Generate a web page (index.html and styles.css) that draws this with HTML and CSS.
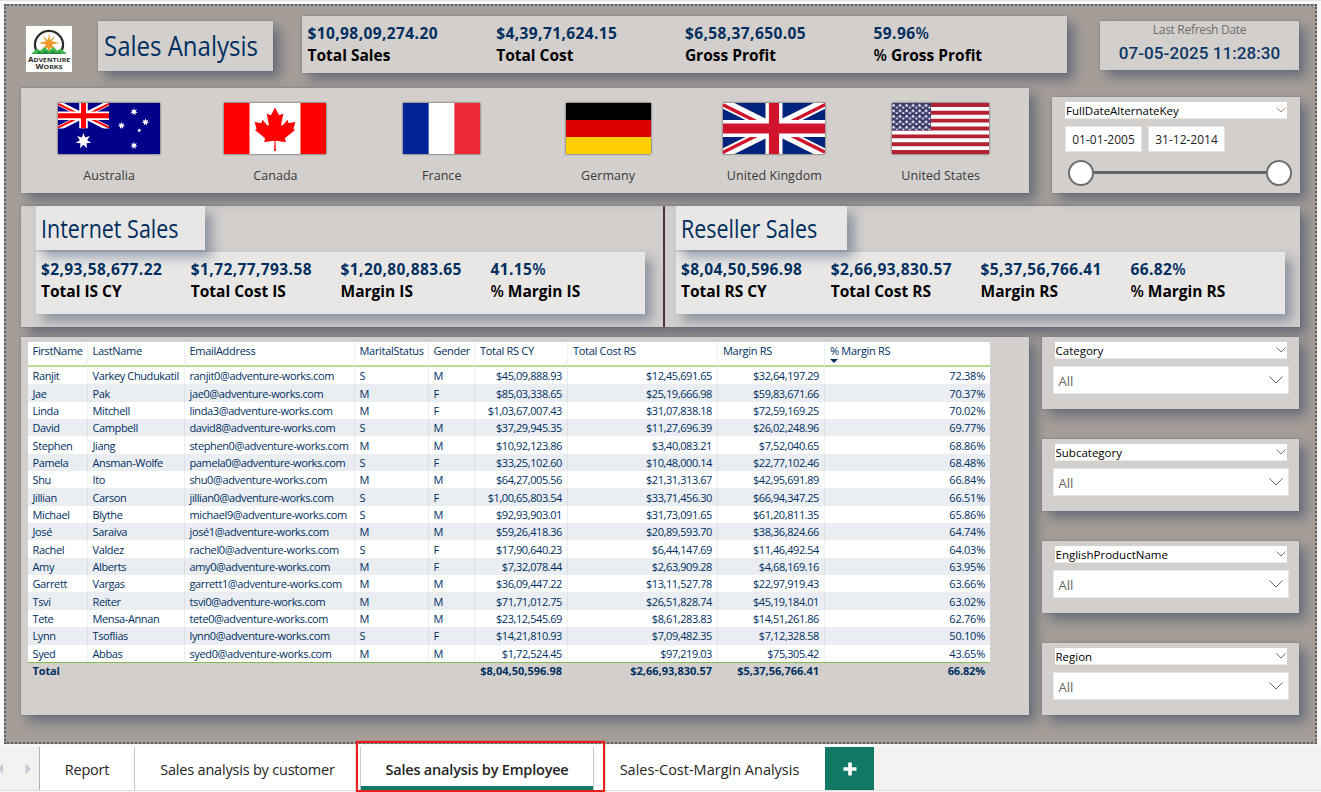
FILE: index.html
```html
<!DOCTYPE html>
<html lang="en">
<head>
<meta charset="utf-8">
<title>Sales Analysis</title>
<link rel="stylesheet" href="styles.css">
</head>
<body>
<main class="report">
  <header class="row row-top">
    <svg class="logo" viewBox="0 0 46 46">
      <rect width="46" height="46" fill="#fff"/>
      <path d="M10 24A14 14 0 1 1 36 24" fill="none" stroke="#2b2b2b" stroke-width="2.200"/>
      <path d="M23 6.500L24 14.200 29.500 9.500 25.800 15.300 33.500 17 25.800 18.500 30 24.500 24.500 21.500 23 26 21.500 21.500 16 24.500 20.200 18.500 12.500 17 20.200 15.300 16.500 9.500 22 14.200z" fill="#ee9a2b"/>
      <path d="M5 28l6-5.500 3 2.200 4.500-3.700 4.500 3.700 4.500-3.700 4 3.700 3-2.200L41 28z" fill="#43b649"/>
      <path d="M10 28l3-3 3 2.500 3-3 4 3 4-3 3.500 3 2.500-2 3 2.500z" fill="#1f8a45"/>
      <text class="logo-text" x="23" y="35.600" textLength="42" lengthAdjust="spacingAndGlyphs">A<tspan font-size="5.600">DVENTURE</tspan></text>
      <text class="logo-text" x="23" y="43" textLength="27" lengthAdjust="spacingAndGlyphs">W<tspan font-size="5.600">ORKS</tspan></text>
    </svg>
    <h1 class="panel title"><span>Sales Analysis</span></h1>
    <section class="panel kpis">
      <div class="kpi"><b>$10,98,09,274.20</b><strong>Total Sales</strong></div>
      <div class="kpi"><b>$4,39,71,624.15</b><strong>Total Cost</strong></div>
      <div class="kpi"><b>$6,58,37,650.05</b><strong>Gross Profit</strong></div>
      <div class="kpi"><b>59.96<i>%</i></b><strong><i>%</i> Gross Profit</strong></div>
    </section>
    <section class="panel refresh"><span class="refresh-label">Last Refresh Date</span><span class="refresh-value">07-05-2025 11:28:30</span></section>
  </header>

  <div class="row row-flags">
    <section class="panel flags">
      <figure><svg width="102" height="51" viewBox="0 0 102 51">
        <rect width="102" height="51" fill="#00008b"/>
        <svg width="51" height="25.500" viewBox="0 0 60 30" preserveAspectRatio="none">
          <path d="M0 0L60 30M60 0L0 30" stroke="#fff" stroke-width="6"/>
          <path d="M0 1L28 15M32 15L60 29M60 1L32 15M28 15L0 29" stroke="#f00" stroke-width="2.400"/>
          <path d="M30 0V30M0 15H60" stroke="#fff" stroke-width="10"/>
          <path d="M30 0V30M0 15H60" stroke="#f00" stroke-width="6"/>
        </svg>
        <defs><path id="star7" d="M0-8L1.600-3.400 6.300-5 3.700-.8 7.800 1.800 3 2.300 3.500 7.200 0 3.700-3.500 7.200-3 2.300-7.800 1.800-3.700-.8-6.300-5-1.600-3.400z" fill="#fff"/></defs>
        <use href="#star7" transform="translate(25.500 38)"/>
        <use href="#star7" transform="translate(76 8.800) scale(.47)"/>
        <use href="#star7" transform="translate(63.500 22.500) scale(.47)"/>
        <use href="#star7" transform="translate(87.500 19) scale(.47)"/>
        <use href="#star7" transform="translate(76 42.500) scale(.47)"/>
        <use href="#star7" transform="translate(81.300 27.500) scale(.27)"/>
      </svg><figcaption>Australia</figcaption></figure>
      <figure><svg width="102" height="51" viewBox="0 0 102 51">
        <rect width="102" height="51" fill="#f00"/><rect x="25.500" width="51" height="51" fill="#fff"/>
        <path d="M51 4.500L47.300 11.500C46.800 12.300 46.200 12.200 45.400 11.800L42.700 10.400 44.700 21C45.100 22.900 43.800 22.900 43.100 22.100L38.400 16.800 37.600 19.500C37.500 19.800 37.100 20.200 36.500 20.100L30.600 18.900 32.200 24.500C32.500 25.700 32.800 26.200 31.800 26.600L31 27 40.500 34.700C40.900 35 41.100 35.500 41 36L40.100 39C43.400 38.600 46.400 38.100 49.700 37.700 50 37.700 50.500 38.100 50.500 38.500L50.100 48H51.900L51.500 38.500C51.500 38.100 52 37.700 52.300 37.700 55.600 38.100 58.600 38.600 61.900 39L61 36C60.900 35.500 61.100 35 61.500 34.700L71 27 70.200 26.600C69.200 26.200 69.500 25.700 69.800 24.500L71.400 18.900 65.500 20.100C64.900 20.200 64.500 19.800 64.400 19.500L63.600 16.800 58.900 22.100C58.200 22.900 56.900 22.900 57.300 21L59.300 10.400 56.600 11.800C55.800 12.200 55.200 12.300 54.700 11.500z" fill="#f00"/>
      </svg><figcaption>Canada</figcaption></figure>
      <figure><svg width="77" height="51" viewBox="0 0 3 2" preserveAspectRatio="none">
        <rect width="3" height="2" fill="#fff"/><rect width="1" height="2" fill="#002395"/><rect x="2" width="1" height="2" fill="#ed2939"/>
      </svg><figcaption>France</figcaption></figure>
      <figure><svg width="85" height="51" viewBox="0 0 5 3">
        <rect width="5" height="3" fill="#d00"/><rect width="5" height="1"/><rect y="2" width="5" height="1" fill="#ffce00"/>
      </svg><figcaption>Germany</figcaption></figure>
      <figure><svg width="102" height="51" viewBox="0 0 60 30">
        <rect width="60" height="30" fill="#00247d"/>
        <path d="M0 0L60 30M60 0L0 30" stroke="#fff" stroke-width="6"/>
        <path d="M0 1.100L28 15.100M32 15L60 28.900M62 0L32 15M28 15L-2 30" stroke="#cf142b" stroke-width="2"/>
        <path d="M30 0V30M0 15H60" stroke="#fff" stroke-width="10"/>
        <path d="M30 0V30M0 15H60" stroke="#cf142b" stroke-width="6"/>
      </svg><figcaption>United Kingdom</figcaption></figure>
      <figure><svg width="97" height="51" viewBox="0 0 97 52" preserveAspectRatio="none">
        <defs><pattern id="stars" x="0" y="0" width="6.500" height="5.600" patternUnits="userSpaceOnUse"><path d="M1.600.5l.6 1.200 1.300.1-1 .8.400 1.300-1.300-.7-1.300.7.400-1.300-1-.8 1.300-.1zM4.900 3.300l.5 1 1.100.1-.9.700.3 1-1-.6-1 .6.300-1-.9-.7 1.100-.1z" fill="#fff"/></pattern></defs>
        <rect width="97" height="52" fill="#fff"/>
        <path d="M0 2H97M0 10H97M0 18H97M0 26H97M0 34H97M0 42H97M0 50H97" stroke="#b22234" stroke-width="4"/>
        <rect width="39" height="28" fill="#3c3b6e"/><rect width="39" height="28" fill="url(#stars)"/>
      </svg><figcaption>United States</figcaption></figure>
    </section>
    <section class="panel dates">
      <div class="slicer-head"><span>FullDateAlternateKey</span><svg class="chev-s warm" viewBox="0 0 10 6"><path d="M.5.500L5 5 9.500.500"/></svg></div>
      <div class="date-inputs"><span>01-01-2005</span><span>31-12-2014</span></div>
      <div class="slider"><i></i><i></i></div>
    </section>
  </div>

  <div class="row row-channels panel">
    <section class="channel internet">
      <h2 class="subtitle"><span>Internet Sales</span></h2>
      <div class="card">
        <div class="kpi"><b>$2,93,58,677.22</b><strong>Total IS CY</strong></div>
        <div class="kpi"><b>$1,72,77,793.58</b><strong>Total Cost IS</strong></div>
        <div class="kpi"><b>$1,20,80,883.65</b><strong>Margin IS</strong></div>
        <div class="kpi"><b>41.15<i>%</i></b><strong><i>%</i> Margin IS</strong></div>
      </div>
    </section>
    <section class="channel reseller">
      <h2 class="subtitle"><span>Reseller Sales</span></h2>
      <div class="card">
        <div class="kpi"><b>$8,04,50,596.98</b><strong>Total RS CY</strong></div>
        <div class="kpi"><b>$2,66,93,830.57</b><strong>Total Cost RS</strong></div>
        <div class="kpi"><b>$5,37,56,766.41</b><strong>Margin RS</strong></div>
        <div class="kpi"><b>66.82<i>%</i></b><strong><i>%</i> Margin RS</strong></div>
      </div>
    </section>
  </div>

  <div class="row row-detail">
    <section class="panel table-panel">
      <table>
        <colgroup><col class="c1"><col class="c2"><col class="c3"><col class="c4"><col class="c5"><col class="c6"><col class="c7"><col class="c8"><col class="c9"></colgroup>
        <thead><tr><th>FirstName<th>LastName<th>EmailAddress<th>MaritalStatus<th>Gender<th>Total RS CY<th>Total Cost RS<th>Margin RS<th class="sorted">% Margin RS</tr></thead>
        <tbody>
        <tr><td>Ranjit<td>Varkey Chudukatil<td>ranjit0@adventure-works.com<td>S<td>M<td>$45,09,888.93<td>$12,45,691.65<td>$32,64,197.29<td>72.38%
        <tr><td>Jae<td>Pak<td>jae0@adventure-works.com<td>M<td>F<td>$85,03,338.65<td>$25,19,666.98<td>$59,83,671.66<td>70.37%
        <tr><td>Linda<td>Mitchell<td>linda3@adventure-works.com<td>M<td>F<td>$1,03,67,007.43<td>$31,07,838.18<td>$72,59,169.25<td>70.02%
        <tr><td>David<td>Campbell<td>david8@adventure-works.com<td>S<td>M<td>$37,29,945.35<td>$11,27,696.39<td>$26,02,248.96<td>69.77%
        <tr><td>Stephen<td>Jiang<td>stephen0@adventure-works.com<td>M<td>M<td>$10,92,123.86<td>$3,40,083.21<td>$7,52,040.65<td>68.86%
        <tr><td>Pamela<td>Ansman-Wolfe<td>pamela0@adventure-works.com<td>S<td>F<td>$33,25,102.60<td>$10,48,000.14<td>$22,77,102.46<td>68.48%
        <tr><td>Shu<td>Ito<td>shu0@adventure-works.com<td>M<td>M<td>$64,27,005.56<td>$21,31,313.67<td>$42,95,691.89<td>66.84%
        <tr><td>Jillian<td>Carson<td>jillian0@adventure-works.com<td>S<td>F<td>$1,00,65,803.54<td>$33,71,456.30<td>$66,94,347.25<td>66.51%
        <tr><td>Michael<td>Blythe<td>michael9@adventure-works.com<td>S<td>M<td>$92,93,903.01<td>$31,73,091.65<td>$61,20,811.35<td>65.86%
        <tr><td>José<td>Saraiva<td>josé1@adventure-works.com<td>M<td>M<td>$59,26,418.36<td>$20,89,593.70<td>$38,36,824.66<td>64.74%
        <tr><td>Rachel<td>Valdez<td>rachel0@adventure-works.com<td>S<td>F<td>$17,90,640.23<td>$6,44,147.69<td>$11,46,492.54<td>64.03%
        <tr><td>Amy<td>Alberts<td>amy0@adventure-works.com<td>M<td>F<td>$7,32,078.44<td>$2,63,909.28<td>$4,68,169.16<td>63.95%
        <tr><td>Garrett<td>Vargas<td>garrett1@adventure-works.com<td>M<td>M<td>$36,09,447.22<td>$13,11,527.78<td>$22,97,919.43<td>63.66%
        <tr><td>Tsvi<td>Reiter<td>tsvi0@adventure-works.com<td>M<td>M<td>$71,71,012.75<td>$26,51,828.74<td>$45,19,184.01<td>63.02%
        <tr><td>Tete<td>Mensa-Annan<td>tete0@adventure-works.com<td>M<td>M<td>$23,12,545.69<td>$8,61,283.83<td>$14,51,261.86<td>62.76%
        <tr><td>Lynn<td>Tsoflias<td>lynn0@adventure-works.com<td>S<td>F<td>$14,21,810.93<td>$7,09,482.35<td>$7,12,328.58<td>50.10%
        <tr><td>Syed<td>Abbas<td>syed0@adventure-works.com<td>M<td>M<td>$1,72,524.45<td>$97,219.03<td>$75,305.42<td>43.65%
        </tbody>
        <tfoot><tr><td>Total<td><td><td><td><td>$8,04,50,596.98<td>$2,66,93,830.57<td>$5,37,56,766.41<td>66.82%</tr></tfoot>
      </table>
    </section>
    <aside class="slicers">
      <section class="panel slicer"><div class="slicer-head"><span>Category</span><svg class="chev-s" viewBox="0 0 10 6"><path d="M.5.500L5 5 9.500.500"/></svg></div><div class="select"><span>All</span><svg viewBox="0 0 14 8"><path d="M.5.500L7 7 13.500.500"/></svg></div></section>
      <section class="panel slicer"><div class="slicer-head"><span>Subcategory</span><svg class="chev-s" viewBox="0 0 10 6"><path d="M.5.500L5 5 9.500.500"/></svg></div><div class="select"><span>All</span><svg viewBox="0 0 14 8"><path d="M.5.500L7 7 13.500.500"/></svg></div></section>
      <section class="panel slicer"><div class="slicer-head"><span>EnglishProductName</span><svg class="chev-s" viewBox="0 0 10 6"><path d="M.5.500L5 5 9.500.500"/></svg></div><div class="select"><span>All</span><svg viewBox="0 0 14 8"><path d="M.5.500L7 7 13.500.500"/></svg></div></section>
      <section class="panel slicer"><div class="slicer-head"><span>Region</span><svg class="chev-s" viewBox="0 0 10 6"><path d="M.5.500L5 5 9.500.500"/></svg></div><div class="select"><span>All</span><svg viewBox="0 0 14 8"><path d="M.5.500L7 7 13.500.500"/></svg></div></section>
    </aside>
  </div>
</main>
<nav class="tabs">
  <div class="pager"><svg width="39" height="43" viewBox="0 0 39 43"><path d="M3 16.500V27L-2 21.700z" fill="#c3cad6"/><path d="M25.500 16.500V27L31 21.700z" fill="#c3cad6"/></svg></div>
  <a class="tab t-report">Report</a>
  <a class="tab t-customer">Sales analysis by customer</a>
  <a class="tab t-employee active">Sales analysis by Employee<span class="highlight"></span></a>
  <a class="tab t-margin">Sales-Cost-Margin Analysis</a>
  <a class="add"><svg width="14" height="14" viewBox="0 0 14 14"><path d="M7 .5V13.500M.5 7H13.500" stroke="#fff" stroke-width="3.600"/></svg></a>
</nav>
</body>
</html>
```
FILE: styles.css
```css
* { box-sizing: border-box; }

body {
  margin: 0;
  width: 1321px;
  height: 792px;
  overflow: hidden;
  display: flex;
  flex-direction: column;
  background: #f8f8f8;
  border-top: 1px solid #e2e2e2;
  font-family: "Open Sans", "Noto Sans", sans-serif;
  color: #002f5f;
}

h1, h2, figure { margin: 0; font-weight: 400; }
i { font-style: normal; font-weight: 600; }

.report {
  flex: none;
  width: 1313px;
  height: 740px;
  margin: 3px 0 0 4px;
  padding-top: 10px;
  background: #a59d97;
  border: 2px dotted #5f5e5d;
  overflow: hidden;
}

.row { display: flex; align-items: flex-start; }

.panel {
  background: #d3cfcc;
  box-shadow: 7px 7px 11px rgba(0, 32, 80, .36), 0 0 2px rgba(0, 32, 80, .25);
}

/* Header row */
.row-top { height: 57px; padding-left: 20px; }
.logo { width: 46px; height: 46px; margin-top: 10px; }
.logo-text { font: 700 6.600px "Open Sans", sans-serif; fill: #2b2b2b; text-anchor: middle; }

.title { width: 175px; height: 50px; margin: 5px 0 0 26px; padding-left: 6px; font-size: 28px; line-height: 48px; }
.title span, .subtitle span { display: inline-block; transform: scaleX(.857); transform-origin: left; white-space: nowrap; }
.subtitle span { transform: scaleX(.842); }

.kpis { width: 765px; height: 57px; margin-left: 29px; padding: 6px 0 0 5.500px; display: grid; grid-template-columns: repeat(4, 188.700px); }
.kpi { display: flex; flex-direction: column; font-size: 15.500px; line-height: 22px; white-space: nowrap; }
.kpi b { font-weight: 700; letter-spacing: .4px; }
.kpi strong { color: #000; letter-spacing: 0; }

.refresh { width: 199px; height: 49px; margin: 5px 0 0 33px; display: flex; flex-direction: column; align-items: center; }
.refresh-label { font-size: 12px; line-height: 18px; color: #6f6d6b; letter-spacing: -.3px; }
.refresh-value { font: 500 17px/28px Roboto, sans-serif; letter-spacing: .08px; color: #0b3768; }

/* Country row */
.row-flags { height: 105px; margin-top: 15px; padding-left: 15px; }
.flags { width: 1008px; height: 105px; padding: 15px 0 0 5px; display: grid; grid-template-columns: repeat(6, 166.300px); }
.flags figure { display: flex; flex-direction: column; align-items: center; }
.flags figure > svg { display: block; flex: none; box-shadow: 0 0 2px #333; }
figcaption { margin-top: 11.500px; font-size: 12.500px; line-height: 20px; letter-spacing: .05px; color: #3a3938; }

.dates { width: 248px; height: 96px; margin: 9px 0 0 23px; padding: 5px 13px; }
.slicer-head { height: 17px; display: flex; justify-content: space-between; padding: 0 1px; background: #fff; border-bottom: 1px solid #ebe9e7; color: #000; font-size: 11.500px; line-height: 17px; }
.chev-s { width: 10px; height: 6px; margin-top: 5px; fill: none; stroke: #777; }
.warm { stroke: #b08a70; }
.date-inputs { display: flex; gap: 6px; margin-top: 7px; }
.date-inputs span { width: 77px; height: 26px; background: #fff; border: 1px solid #e6e4e2; font-size: 12px; line-height: 25px; text-align: center; color: #222; }
.slider { display: flex; justify-content: space-between; align-items: center; width: 224px; height: 27px; margin: 7px 0 0 3px; background: linear-gradient(#686664, #686664) center / 190px 3px no-repeat; }
.slider i { width: 26px; height: 26px; border: 2px solid #716f6d; border-radius: 50%; background: #fff; }

/* Channel row */
.row-channels { width: 1279px; height: 121px; margin: 13px 0 0 15px; }
.channel { height: 121px; padding-left: 15px; }
.internet { width: 644px; border-right: 2px solid #50303d; }
.reseller { width: 635px; padding-left: 11px; }
.subtitle { position: relative; z-index: 1; width: 169px; height: 44px; padding-left: 5px; background: #e8e7e5; box-shadow: 7px 7px 11px rgba(0, 32, 80, .34); font-size: 25.500px; line-height: 45px; }
.reseller .subtitle { width: 171px; }
.card { width: 609px; height: 62px; margin-top: 2px; padding: 6px 0 0 5px; display: grid; grid-template-columns: repeat(4, 149.800px); background: #e8e7e5; box-shadow: 7px 7px 11px rgba(0, 32, 80, .34); }

/* Detail row */
.row-detail { margin-top: 10px; padding-left: 15px; }
.table-panel { width: 1008px; height: 378px; padding: 5px 0 0 6.500px; }
table { width: 962.500px; border-collapse: separate; border-spacing: 0; table-layout: fixed; font-size: 11px; letter-spacing: -.38px; }
.c1 { width: 60px; }
.c2 { width: 97px; }
.c3 { width: 170px; }
.c4 { width: 74px; }
.c5 { width: 46.500px; }
.c6 { width: 93px; }
.c7 { width: 150px; }
.c8 { width: 107px; }
.c9 { width: 165px; }
th, td { padding: 0 5px; white-space: nowrap; text-align: left; border-right: 1px solid rgba(120, 130, 140, .13); }
th:last-child, td:last-child, tfoot td { border-right: 0; }
th { height: 24px; padding-bottom: 5px; font-weight: 400; line-height: 18px; letter-spacing: -.3px; background: #fff; border-bottom: 2px solid #b7dc92; }
td { height: 17.350px; line-height: 17px; }
tbody tr { background: #fff; }
tbody tr:nth-child(even) { background: #eaedf2; }
td:nth-child(n+6) { text-align: right; }
tbody td:nth-child(n+6) { letter-spacing: -.42px; }
tbody td:last-child { letter-spacing: -.25px; }
tfoot td { height: 18px; line-height: 16px; font-weight: 700; letter-spacing: 0; border-top: 1px solid #84bd52; }
tfoot td:first-child, tfoot td:last-child { letter-spacing: -.15px; }
tfoot td:nth-child(n+6):not(:last-child) { padding-right: 6px; }
.sorted { position: relative; }
.sorted::after { content: ""; position: absolute; left: 5px; bottom: 2px; border: 4px solid transparent; border-top-color: #002f5f; border-bottom: 0; }

.slicers { margin-left: 13px; display: flex; flex-direction: column; gap: 30px; }
.slicer { width: 257px; height: 72px; padding: 5px 10.500px; }
.slicer .slicer-head { margin: 0 2px; }
.select { height: 28px; margin-top: 7px; padding: 0 5px; display: flex; align-items: center; justify-content: space-between; background: #fff; border: 1px solid #e8e6e4; font-size: 13px; line-height: 28px; color: #666; }
.select span { padding-top: 2px; }
.select svg { width: 14px; height: 8px; fill: none; stroke: #666; }

/* Page tabs */
.tabs { display: flex; flex: none; height: 44px; margin-top: 3px; background: #f3f2f1; border-bottom: 1px solid #e1dfdd; font-size: 14.500px; line-height: 45px; color: #252423; letter-spacing: -.2px; }
.pager { width: 40px; border-right: 1px solid #b3b0ad; }
.tab { position: relative; background: #fff; text-align: center; white-space: nowrap; }
.t-report { width: 95px; border-right: 1px solid #c8c6c4; }
.t-customer { width: 225px; }
.t-employee { width: 234px; }
.t-margin { width: 231px; letter-spacing: 0; }
.active { z-index: 1; font-weight: 600; border: 1px solid #c8c6c4; border-width: 0 1px; box-shadow: inset 0 -4px #117865; }
.highlight { position: absolute; left: -5px; top: -6px; width: 249px; height: 51px; border: 2px solid #e61e1e; box-shadow: 0 0 1px #e61e1e; }
.add { width: 49px; display: flex; align-items: center; justify-content: center; background: #117865; }
```
